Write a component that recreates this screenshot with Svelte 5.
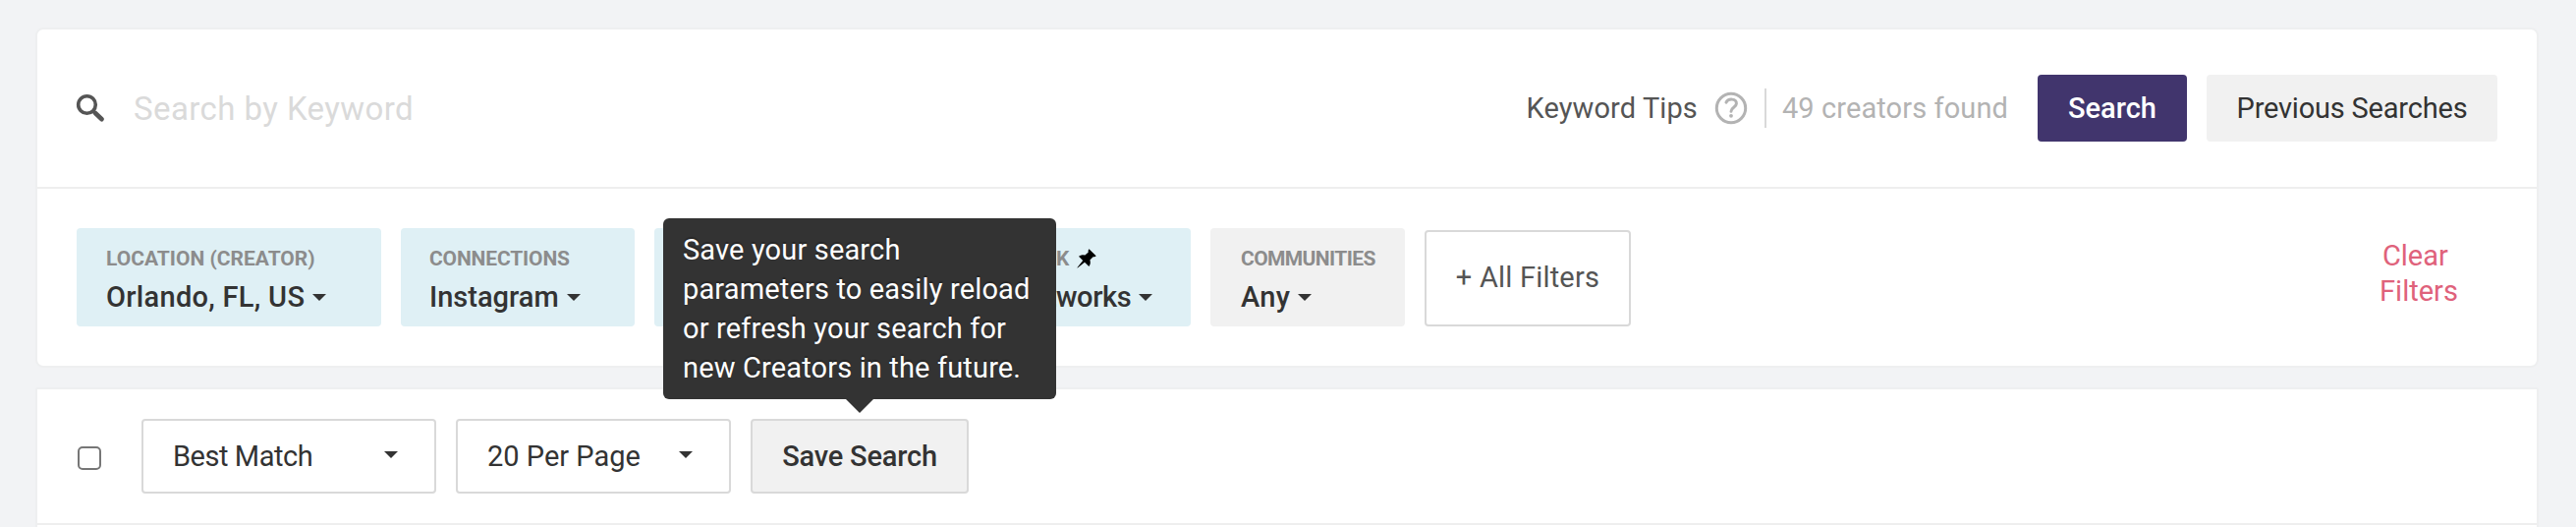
<script>
  let keyword = "";
  let sort = "Best Match";
  let perPage = "20 Per Page";
  let showTip = true;

  const filters = [
    { name: "location", label: "Location (Creator)", value: "Orlando, FL, US", active: true },
    { name: "connections", label: "Connections", value: "Instagram", active: true },
    { name: "audience", label: "Audience", value: "Any", active: true },
    { name: "network", label: "Creator Network", value: "All Creator Networks", active: true, pinned: true },
    { name: "communities", label: "Communities", value: "Any", active: false },
  ];

  const clearKeyword = () => (keyword = "");
</script>

<style>
  :global(body) {
    background: #f2f3f5;
    font-family: Roboto, "Liberation Sans", sans-serif;
    font-size: 29px;
    color: #333;
  }

  main {
    height: 536px;
    padding: 28px 38px 0 36px;
    box-sizing: border-box;
    overflow: hidden;
  }

  button,
  input {
    font: inherit;
    color: inherit;
    margin: 0;
    padding: 0;
    border: none;
    background: none;
    box-sizing: border-box;
    white-space: nowrap;
  }

  .card {
    background: white;
    border: 2px solid #eeeff0;
    border-radius: 8px;
    box-sizing: border-box;
  }

  .search-card {
    height: 346px;
    margin-bottom: 20px;
  }

  .results-card {
    height: 170px;
    border-radius: 2px 2px 0 0;
  }

  .search-bar {
    display: flex;
    align-items: center;
    height: 162px;
    padding: 0 40px 0 39px;
    box-sizing: border-box;
    border-bottom: 2px solid #eee;
  }

  .search-icon {
    width: 30px;
    height: 30px;
  }

  .keyword {
    flex: 1;
    margin-left: 29px;
    font-size: 33px;
    letter-spacing: 0.42px;
    outline: none;
  }

  .keyword::placeholder {
    color: #dadada;
    opacity: 1;
  }

  .tips {
    letter-spacing: 0.1px;
    color: #555;
  }

  .help {
    width: 34px;
    height: 34px;
    margin-left: 17px;
  }

  .found {
    margin-left: 17px;
    padding-left: 16px;
    line-height: 40px;
    letter-spacing: 0.1px;
    border-left: 2px solid #d9d9d9;
    color: #b3b3b3;
  }

  .btn {
    height: 68px;
    margin-left: 20px;
    border-radius: 4px;
    background: #f1f1f1;
  }

  .btn-previous {
    width: 296px;
    letter-spacing: -0.2px;
  }

  .btn-search {
    width: 152px;
    margin-left: 30px;
    color: white;
    font-weight: 500;
    background: #41356d;
  }

  .filters {
    display: flex;
    padding: 40px 40px 0;
  }

  .chip {
    height: 100px;
    margin-right: 20px;
    padding: 19px 0 12px 30px;
    border-radius: 4px;
    text-align: left;
    background: #f1f1f1;
  }

  .chip.active {
    background: #dff0f5;
  }

  .location {
    width: 310px;
  }

  .location .value {
    letter-spacing: 0.3px;
  }

  .connections {
    width: 238px;
    padding-left: 29px;
  }

  .connections .label {
    letter-spacing: -0.15px;
  }

  .audience {
    width: 176px;
  }

  .network {
    width: 350px;
    padding-left: 29px;
  }

  .network .value {
    letter-spacing: -0.42px;
  }

  .communities {
    width: 198px;
    padding-left: 31px;
  }

  .communities .label {
    letter-spacing: -0.6px;
  }

  .communities .value {
    letter-spacing: 0.3px;
  }

  .label {
    display: flex;
    align-items: center;
    height: 24px;
    font-size: 21px;
    font-weight: 700;
    text-transform: uppercase;
    color: #8c8c8c;
  }

  .pin {
    width: 20px;
    height: 20px;
    margin-left: 8px;
  }

  .value {
    display: flex;
    align-items: center;
    height: 36px;
    margin-top: 9px;
    font-weight: 500;
  }

  .caret {
    display: inline-block;
    border: 7px solid transparent;
    border-top-color: #333;
    border-bottom: none;
  }

  .value .caret {
    margin-left: 8px;
  }

  .all-filters {
    width: 210px;
    height: 98px;
    margin-top: 2px;
    padding-bottom: 2px;
    border: 2px solid #d9d9d9;
    border-radius: 4px;
    letter-spacing: 0.2px;
    color: #555;
  }

  .clear {
    width: 100px;
    height: 72px;
    margin: 10px 30px 0 auto;
    line-height: 36px;
    text-align: center;
    color: #df627b;
  }

  .toolbar {
    display: flex;
    align-items: center;
    height: 138px;
    padding: 0 40px 0 41px;
    box-sizing: border-box;
    border-bottom: 2px solid #eee;
  }

  .check {
    appearance: none;
    width: 24px;
    height: 24px;
    margin-top: 4px;
    border: 2px solid #767676;
    border-radius: 5px;
  }

  .select {
    display: flex;
    align-items: center;
    justify-content: space-between;
    width: 300px;
    height: 76px;
    margin-left: 41px;
    padding: 0 37px 0 30px;
    border: 2px solid #d9d9d9;
    border-radius: 4px;
    letter-spacing: -0.45px;
  }

  .select.per-page {
    width: 280px;
    margin-left: 20px;
    letter-spacing: 0;
  }

  .select .caret {
    margin-bottom: 4px;
  }

  .save {
    position: relative;
    margin-left: 20px;
  }

  .btn-save {
    width: 222px;
    height: 76px;
    border: 2px solid #d9d9d9;
    border-radius: 4px;
    font-weight: 500;
    letter-spacing: -0.2px;
    background: #f1f1f1;
  }

  .tooltip {
    position: absolute;
    left: 50%;
    bottom: 96px;
    width: 400px;
    height: 184px;
    margin-left: -200px;
    padding: 12px 20px;
    box-sizing: border-box;
    border-radius: 6px;
    line-height: 40px;
    letter-spacing: 0.15px;
    color: white;
    background: #333;
    text-shadow: 0 -2px 1px rgba(0, 0, 0, 0.25);
  }

  .tooltip::after {
    content: "";
    position: absolute;
    top: 100%;
    left: 50%;
    margin-left: -14px;
    border: 14px solid transparent;
    border-top-color: #333;
    border-bottom: none;
  }
</style>

<main>
  <section class="card search-card">
    <div class="search-bar">
      <svg class="search-icon" viewBox="0 0 30 30" fill="none" stroke="#555">
        <circle cx="11.5" cy="11.5" r="8.8" stroke-width="3.6" />
        <path d="M17.8 18 L19.5 19.6" stroke-width="3.6" />
        <path d="M20 20 L26.6 26.2" stroke-width="4.6" stroke-linecap="round" />
      </svg>
      <input class="keyword" type="text" placeholder="Search by Keyword" bind:value={keyword} />
      <span class="tips">Keyword Tips</span>
      <svg class="help" viewBox="0 0 34 34" fill="none" stroke="#b3b3b3" stroke-width="3">
        <circle cx="17" cy="17" r="14.7" />
        <path d="M12 11.2 C14 6.8 22.6 7 22.4 12.4 C22.2 16.6 17 16 17 20.3" stroke-linecap="round" />
        <circle cx="17" cy="24.8" r="1.9" fill="#b3b3b3" stroke="none" />
      </svg>
      <span class="found">49 creators found</span>
      <button class="btn btn-search">Search</button>
      <button class="btn btn-previous">Previous Searches</button>
    </div>

    <div class="filters">
      {#each filters as filter}
        <button class="chip {filter.name}" class:active={filter.active}>
          <span class="label">
            {filter.label}
            {#if filter.pinned}
              <svg class="pin" viewBox="0 0 20 20">
                <path d="M12.5 0.3 L19.7 7.3 Q18.6 8.8 16.6 8.2 L13.4 11.6 Q14.6 15.4 12.4 18 L8 13.8 L0.8 19.6 L0.4 19.2 L6.2 12 L2 7.7 Q4.6 5.4 8.4 6.6 L11.8 3.4 Q11.2 1.6 12.5 0.3 Z" />
              </svg>
            {/if}
          </span>
          <span class="value">{filter.value}<i class="caret"></i></span>
        </button>
      {/each}
      <button class="all-filters">+ All Filters</button>
      <button class="clear" on:click={clearKeyword}>Clear&nbsp;<br />Filters</button>
    </div>
  </section>

  <section class="card results-card">
    <div class="toolbar">
      <input class="check" type="checkbox" />
      <button class="select">{sort}<i class="caret"></i></button>
      <button class="select per-page">{perPage}<i class="caret"></i></button>
      <div class="save">
        <button class="btn-save">Save Search</button>
        {#if showTip}
          <div class="tooltip">
            Save your search parameters to easily reload or refresh your search for new Creators in the future.
          </div>
        {/if}
      </div>
    </div>
  </section>
</main>
